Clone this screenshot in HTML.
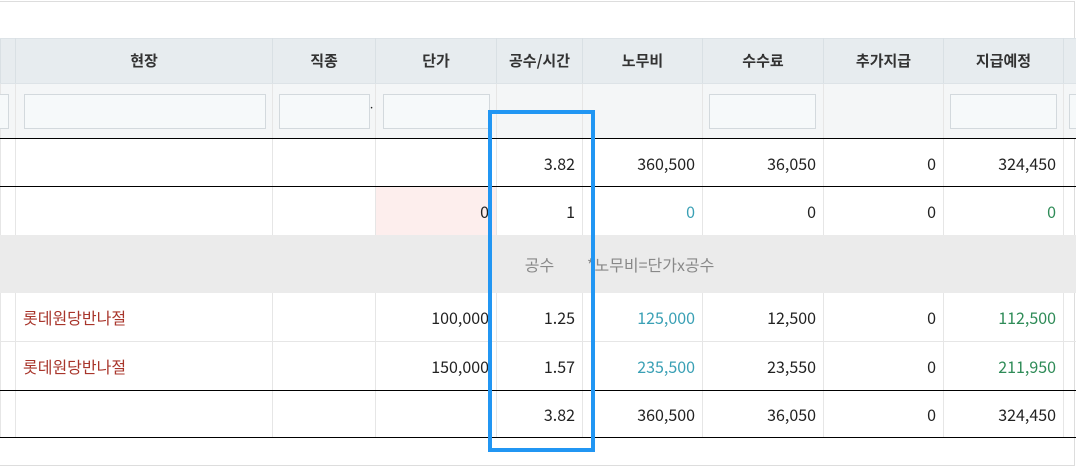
<!DOCTYPE html>
<html><head><meta charset="utf-8"><style>
*{margin:0;padding:0;box-sizing:border-box}
body{width:1076px;height:467px;background:#fff;position:relative;overflow:hidden;font-family:"Noto Sans CJK KR","Liberation Sans",sans-serif;font-size:16px;color:#222}
.frame{position:absolute;left:0;top:1px;width:1075px;height:465px;border:1px solid #ddd;border-left:none}
table{position:absolute;left:0;top:38px;border-collapse:collapse;table-layout:fixed;width:1076px}
td,th{border-left:1px solid #e6e6e6;border-right:1px solid #e6e6e6;padding:0 7px;white-space:nowrap;overflow:visible;line-height:20px}
th{height:45px;background:#e7ecef;font-weight:bold;font-size:15px;color:#333;border-top:1px solid #dde3e7;border-bottom:1px solid #dde3e7;border-left:1px solid #d9e0e4;border-right:1px solid #d9e0e4}
tr.f td{height:55px;background:#f4f6f7;border-bottom:1px solid #000;position:relative}
tr.f .in{position:absolute;top:10px;height:35px;background:#f6f9fa;border:1px solid #d3d9dd}
td{text-align:right;height:48px}
tr.b td{border-bottom:1px solid #000}
tr.g td{height:58px;background:#ebebeb;border-color:#ebebeb;color:#888}
tr.r td{height:49px;border-bottom:1px solid #e6e6e6}
tr.r.k td{border-bottom:1px solid #000}
tr.last td{border-top:1px solid #000;border-bottom:1px solid #000;height:47px}
.t{color:#3aa0b5}.gr{color:#2e8b57}.n{color:#a8352b;text-align:left}
.blue{position:absolute;left:488px;top:110px;width:107px;height:342px;border:4px solid #2196f3}
</style></head><body>
<div class="frame"></div>
<table>
<colgroup><col style="width:15px"><col style="width:257px"><col style="width:103px"><col style="width:121px"><col style="width:86px"><col style="width:120px"><col style="width:121px"><col style="width:120px"><col style="width:120px"><col style="width:13px"></colgroup>
<tr><th></th><th>현장</th><th>직종</th><th>단가</th><th>공수/시간</th><th>노무비</th><th>수수료</th><th>추가지급</th><th>지급예정</th><th></th></tr>
<tr class="f"><td><div class="in" style="left:-10px;width:18px"></div></td><td><div class="in" style="left:8px;width:242px"></div></td><td><div class="in" style="left:6px;width:91px"></div><span style="position:absolute;right:0;top:14px;font-size:12px">·</span></td><td><div class="in" style="left:7px;width:107px"></div></td><td></td><td></td><td><div class="in" style="left:6px;width:107px"></div></td><td></td><td><div class="in" style="left:6px;width:107px"></div></td><td><div class="in" style="left:5px;width:18px"></div></td></tr>
<tr class="b"><td></td><td></td><td></td><td></td><td>3.82</td><td>360,500</td><td>36,050</td><td>0</td><td>324,450</td><td></td></tr>
<tr><td></td><td></td><td></td><td style="background:#fdeeed">0</td><td>1</td><td class="t">0</td><td>0</td><td>0</td><td class="gr">0</td><td></td></tr>
<tr class="g"><td></td><td></td><td></td><td></td><td style="text-align:center;position:relative;overflow:visible">공수<span style="position:absolute;left:90px;top:19px">*노무비=단가x공수</span></td><td></td><td></td><td></td><td></td><td></td></tr>
<tr class="r"><td></td><td class="n">롯데원당반나절</td><td></td><td>100,000</td><td>1.25</td><td class="t">125,000</td><td>12,500</td><td>0</td><td class="gr">112,500</td><td></td></tr>
<tr class="r k"><td></td><td class="n">롯데원당반나절</td><td></td><td>150,000</td><td>1.57</td><td class="t">235,500</td><td>23,550</td><td>0</td><td class="gr">211,950</td><td></td></tr>
<tr class="last"><td></td><td></td><td></td><td></td><td>3.82</td><td>360,500</td><td>36,050</td><td>0</td><td>324,450</td><td></td></tr>
</table>
<div class="blue"></div>
</body></html>
